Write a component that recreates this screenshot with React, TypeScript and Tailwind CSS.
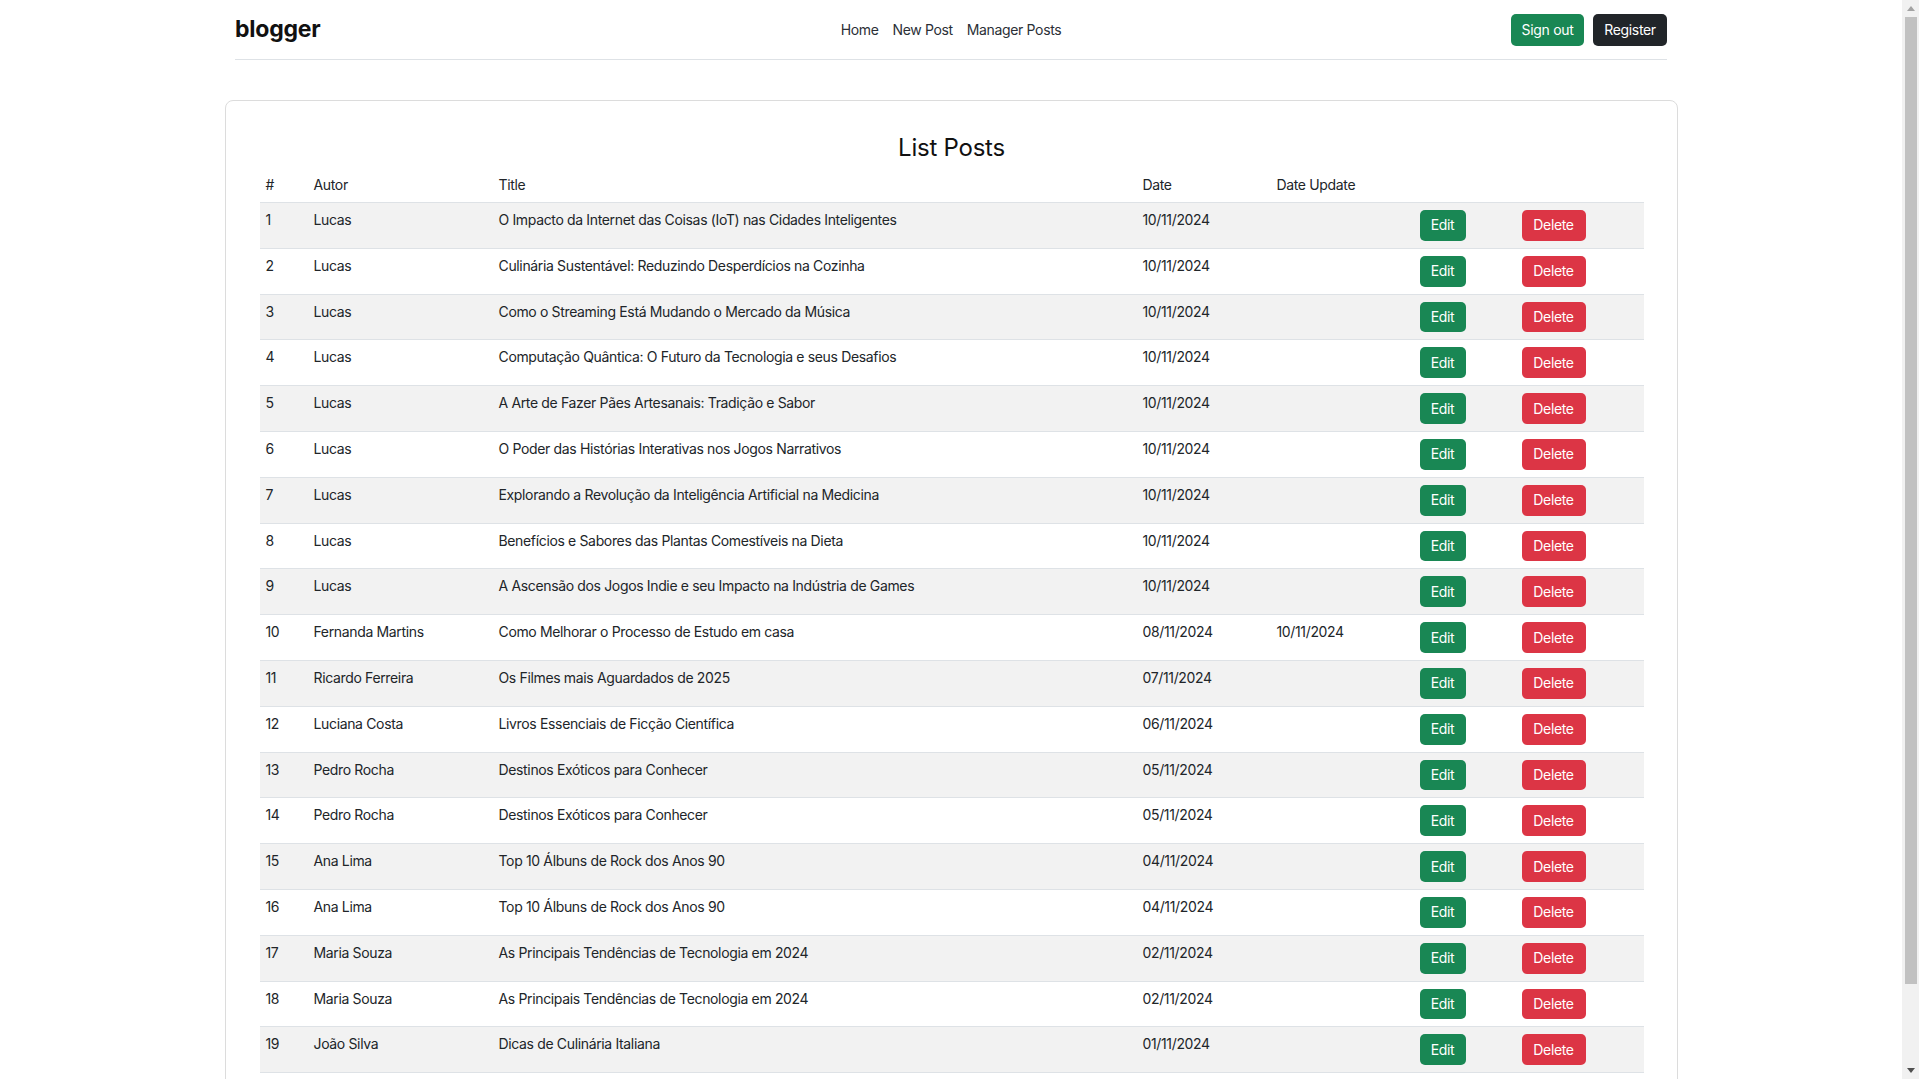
import React from "react";

type Post = {
  id: number;
  autor: string;
  title: string;
  date: string;
  updated?: string;
};

const posts: Post[] = [
  { id: 1, autor: "Lucas", title: "O Impacto da Internet das Coisas (IoT) nas Cidades Inteligentes", date: "10/11/2024" },
  { id: 2, autor: "Lucas", title: "Culinária Sustentável: Reduzindo Desperdícios na Cozinha", date: "10/11/2024" },
  { id: 3, autor: "Lucas", title: "Como o Streaming Está Mudando o Mercado da Música", date: "10/11/2024" },
  { id: 4, autor: "Lucas", title: "Computação Quântica: O Futuro da Tecnologia e seus Desafios", date: "10/11/2024" },
  { id: 5, autor: "Lucas", title: "A Arte de Fazer Pães Artesanais: Tradição e Sabor", date: "10/11/2024" },
  { id: 6, autor: "Lucas", title: "O Poder das Histórias Interativas nos Jogos Narrativos", date: "10/11/2024" },
  { id: 7, autor: "Lucas", title: "Explorando a Revolução da Inteligência Artificial na Medicina", date: "10/11/2024" },
  { id: 8, autor: "Lucas", title: "Benefícios e Sabores das Plantas Comestíveis na Dieta", date: "10/11/2024" },
  { id: 9, autor: "Lucas", title: "A Ascensão dos Jogos Indie e seu Impacto na Indústria de Games", date: "10/11/2024" },
  { id: 10, autor: "Fernanda Martins", title: "Como Melhorar o Processo de Estudo em casa", date: "08/11/2024", updated: "10/11/2024" },
  { id: 11, autor: "Ricardo Ferreira", title: "Os Filmes mais Aguardados de 2025", date: "07/11/2024" },
  { id: 12, autor: "Luciana Costa", title: "Livros Essenciais de Ficção Científica", date: "06/11/2024" },
  { id: 13, autor: "Pedro Rocha", title: "Destinos Exóticos para Conhecer", date: "05/11/2024" },
  { id: 14, autor: "Pedro Rocha", title: "Destinos Exóticos para Conhecer", date: "05/11/2024" },
  { id: 15, autor: "Ana Lima", title: "Top 10 Álbuns de Rock dos Anos 90", date: "04/11/2024" },
  { id: 16, autor: "Ana Lima", title: "Top 10 Álbuns de Rock dos Anos 90", date: "04/11/2024" },
  { id: 17, autor: "Maria Souza", title: "As Principais Tendências de Tecnologia em 2024", date: "02/11/2024" },
  { id: 18, autor: "Maria Souza", title: "As Principais Tendências de Tecnologia em 2024", date: "02/11/2024" },
  { id: 19, autor: "João Silva", title: "Dicas de Culinária Italiana", date: "01/11/2024" },
];

function Navbar() {
  return (
    <nav className="w-[1432px] mx-auto h-[60px] border-b border-[#dee2e6] flex items-center">
      <div className="flex-1 text-[23px] font-bold text-[#111] tracking-[-0.01em]">blogger</div>
      <div className="flex items-center gap-[14px] text-[14px] tracking-[-0.025em] text-[#2b2f36]">
        <a className="cursor-pointer">Home</a>
        <a className="cursor-pointer">New Post</a>
        <a className="cursor-pointer">Manager Posts</a>
      </div>
      <div className="flex-1 flex justify-end gap-[9px] tracking-[-0.02em]">
        <button className="h-[32px] w-[73px] rounded-[5px] bg-[#198754] text-white text-[14px]">Sign out</button>
        <button className="h-[32px] w-[74px] rounded-[5px] bg-[#212529] text-white text-[14px]">Register</button>
      </div>
    </nav>
  );
}

function PostsTable() {
  return (
    <table className="w-[1384px] table-fixed border-collapse text-[14px] leading-5 tracking-[-0.025em] text-[#212529]">
      <colgroup>
        <col className="w-[48px]" />
        <col className="w-[185px]" />
        <col className="w-[644px]" />
        <col className="w-[134px]" />
        <col className="w-[143px]" />
        <col className="w-[102px]" />
        <col className="w-[128px]" />
      </colgroup>
      <thead>
        <tr className="border-b border-[#dee2e6] text-left">
          <th className="font-normal pl-[6px] py-[7px]">#</th>
          <th className="font-normal pl-[6px] py-[7px]">Autor</th>
          <th className="font-normal pl-[6px] py-[7px]">Title</th>
          <th className="font-normal pl-[6px] py-[7px]">Date</th>
          <th className="font-normal pl-[6px] py-[7px]">Date Update</th>
          <th></th>
          <th></th>
        </tr>
      </thead>
      <tbody>
        {posts.map((p, i) => (
          <tr key={p.id} className={`border-b border-[#dee2e6] align-top ${i % 2 === 0 ? "bg-[#f2f2f2]" : "bg-white"}`}>
            <td className="pl-[6px] py-[7px]">{p.id}</td>
            <td className="pl-[6px] py-[7px]">{p.autor}</td>
            <td className="pl-[6px] py-[7px]">{p.title}</td>
            <td className="pl-[6px] py-[7px]">{p.date}</td>
            <td className="pl-[6px] py-[7px]">{p.updated ?? ""}</td>
            <td className="pl-[6px] py-[7px]">
              <button className="block h-[30.8px] w-[46px] rounded-[5px] bg-[#198754] text-white text-[14px]">Edit</button>
            </td>
            <td className="pl-[6px] py-[7px]">
              <button className="block h-[30.8px] w-[64px] rounded-[5px] bg-[#dc3545] text-white text-[14px]">Delete</button>
            </td>
          </tr>
        ))}
      </tbody>
    </table>
  );
}

function FakeScrollbar() {
  return (
    <div className="w-[17px] h-full bg-[#f1f1f1] flex flex-col items-center">
      <div className="h-[17px] flex items-center justify-center">
        <svg width="8" height="5" viewBox="0 0 8 5">
          <path d="M0 5 L4 0 L8 5 Z" fill="#a3a3a3" />
        </svg>
      </div>
      <div className="w-[12px] h-[967px] bg-[#c1c1c1]" />
      <div className="flex-1" />
      <div className="h-[17px] flex items-center justify-center">
        <svg width="8" height="5" viewBox="0 0 8 5">
          <path d="M0 0 L8 0 L4 5 Z" fill="#505050" />
        </svg>
      </div>
    </div>
  );
}

export default function App() {
  return (
    <div className="h-screen w-full flex overflow-hidden bg-white" style={{ fontFamily: "Inter, 'Noto Sans', sans-serif" }}>
      <main className="flex-1 overflow-hidden">
        <Navbar />
        <section className="w-[1453px] mx-auto mt-[40px] border border-[#dcdcdc] rounded-[8px] pt-[32px] pb-8 pl-[34px] pr-[33px]">
          <h3 className="text-center text-[24px] leading-[29px] tracking-[-0.01em] mb-[6px] text-[#111]">List Posts</h3>
          <PostsTable />
        </section>
      </main>
      <FakeScrollbar />
    </div>
  );
}
